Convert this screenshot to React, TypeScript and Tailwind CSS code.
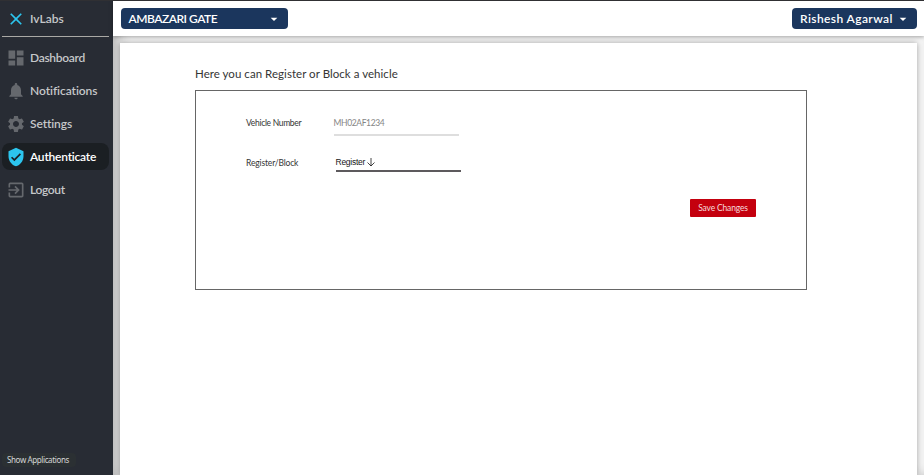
import React from "react";
import { MdDashboard, MdNotifications, MdSettings, MdVerifiedUser, MdExitToApp, MdClose, MdArrowDropDown } from "react-icons/md";

const items = [
  { label: "Dashboard", Icon: MdDashboard, track: "tracking-[-0.3px]" },
  { label: "Notifications", Icon: MdNotifications, track: "tracking-[-0.06px]" },
  { label: "Settings", Icon: MdSettings, track: "tracking-[-0.1px]" },
  { label: "Authenticate", Icon: MdVerifiedUser, track: "tracking-[-0.22px]", active: true },
  { label: "Logout", Icon: MdExitToApp, track: "tracking-[-0.35px]" },
];

function Sidebar() {
  return (
    <aside className="flex h-full w-[113px] shrink-0 flex-col bg-[#282c34] text-[12px] font-semibold text-[#c5c7c9]">
      <div className="mr-[4px] ml-[2px] flex h-[36px] shrink-0 items-center gap-[4.5px] border-b border-[#aaa9a5] pl-[3.5px]">
        <MdClose className="size-5 text-[#2cc5ee]" />
        <span>IvLabs</span>
      </div>
      <nav className="mt-[7px] flex flex-col gap-[6px] pl-[2px]">
        {items.map(({ label, Icon, track, active }) => (
          <a key={label} className={`flex h-[27px] w-[107px] items-center gap-[4.5px] rounded-[8px] pl-[3.5px] ${active ? "bg-[#1b1f23] text-white" : ""}`}>
            <Icon className={`size-5 shrink-0 ${active ? "text-[#2cc5ee]" : "text-[#65686d]"}`} />
            <span className={`whitespace-nowrap ${track}`}>{label}</span>
          </a>
        ))}
      </nav>
      <div className="mt-auto mb-[8px] ml-[2px] flex h-[14px] w-[74px] items-center rounded-[4px] bg-[#2b3033] pl-[5px] font-['Noto_Sans',sans-serif] text-[8px] font-normal tracking-[-0.38px] whitespace-nowrap text-[#d5d7d6]">
        Show Applications
      </div>
    </aside>
  );
}

export default function App() {
  return (
    <div className="flex h-[475px] w-[924px] overflow-hidden border-t border-[#303033] bg-[#282c34] font-[Lato,sans-serif]">
      <Sidebar />
      <div className="flex min-w-0 flex-1 flex-col bg-[#f7f7f7] shadow-[inset_7px_0_14px_-3px_rgba(0,0,0,0.3)]">
        <header className="relative z-10 flex h-[35px] shrink-0 items-center justify-between bg-white pr-[7px] pl-[7.5px] text-[12px] font-semibold text-white shadow-[0_1px_4px_rgba(0,0,0,0.35)]">
          <button className="flex h-[21px] w-[167px] items-center justify-between rounded-[4px] bg-[#1b365d] pr-[6px] pl-[8px]">
            <span className="tracking-[-0.5px] whitespace-nowrap">AMBAZARI GATE</span>
            <MdArrowDropDown className="size-4" />
          </button>
          <button className="flex h-[21px] w-[125px] items-center justify-between rounded-[4px] bg-[#1b365d] pr-[6px] pl-[8px]">
            <span className="tracking-[0.4px] whitespace-nowrap">Rishesh Agarwal</span>
            <MdArrowDropDown className="size-4 shrink-0" />
          </button>
        </header>
        <main className="mt-[7px] mr-[7px] ml-[7px] flex-1 bg-white pt-[22px] pl-[75px] text-[#353535] shadow-[0_0_6px_rgba(0,0,0,0.35)]">
          <h1 className="h-[25px] text-[11.5px] leading-[18px] tracking-[0.04px]">Here you can Register or Block a vehicle</h1>
          <form className="flex h-[200px] w-[612px] flex-col border border-[#666] pt-[24px] pl-[50px] text-[8.5px]">
            <div className="flex">
              <label className="w-[87.5px] leading-[17px] tracking-[-0.31px]">Vehicle Number</label>
              <div className="h-[21px] w-[125px] border-b-2 border-[#dedede] text-[8.5px] leading-[17px] tracking-[-0.37px] text-[#858585]">MH02AF1234</div>
            </div>
            <div className="mt-[18px] flex">
              <label className="w-[89.5px] leading-[19px] tracking-[-0.15px]">Register/Block</label>
              <div className="flex h-[18px] w-[125px] items-center gap-[1px] border-b-2 border-[#5d5a5d] font-['Liberation_Sans',sans-serif] text-[8.5px] tracking-[-0.25px] text-[#171717]">
                <span>Register</span>
                <svg className="size-[10px]" viewBox="0 0 10 10" fill="none" stroke="currentColor" strokeWidth="0.8"><path d="M5 1v8M1.5 5.5 5 9l3.5-3.5" /></svg>
              </div>
            </div>
            <button type="button" className="mt-[25.5px] ml-[444px] flex h-[18px] w-[66px] items-center justify-center rounded-[1px] bg-[#c4000e] pt-px text-[8.5px] tracking-[-0.15px] text-[#f6dadc]">Save Changes</button>
          </form>
        </main>
      </div>
    </div>
  );
}
